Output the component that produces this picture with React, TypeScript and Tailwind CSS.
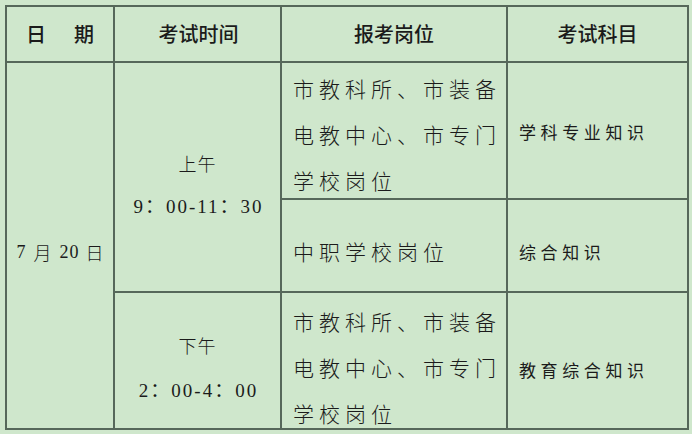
import React from "react";

const sans = { fontFamily: '"Noto Sans CJK SC", "Noto Sans", sans-serif' };
const serif = { fontFamily: '"Liberation Serif", "Noto Sans CJK SC", serif' };

function Cell({ className = "", children }: { className?: string; children?: React.ReactNode }) {
  return <div className={"bg-[#cfe7cc] " + className}>{children}</div>;
}

export default function App() {
  return (
    <div className="w-[692px] h-[434px] bg-[#cfe7cc] pl-[5px] pt-[5px] text-[#1b1b1b]" style={sans}>
      <div className="grid grid-cols-[106px_165px_224px_179px] grid-rows-[54px_135px_91px_135px] gap-[2px] p-[2px] bg-[#56685a] w-[684px] h-[425px]">
        {/* header */}
        <Cell className="flex items-center justify-center text-[20px] font-medium">
          <span className="pr-[2px]">日</span>
          <span className="pl-[26px]">期</span>
        </Cell>
        <Cell className="flex items-center justify-center text-[20px] font-medium pl-[2px]">考试时间</Cell>
        <Cell className="flex items-center justify-center text-[20px] font-medium">报考岗位</Cell>
        <Cell className="flex items-center justify-center text-[20px] font-medium">考试科目</Cell>

        {/* date */}
        <Cell className="row-span-3 flex items-center justify-center text-[18px] pt-[14px]">
          <span style={serif}>7</span>
          <span className="ml-[8px] font-light">月</span>
          <span className="ml-[8px] tracking-[1px]" style={serif}>20</span>
          <span className="ml-[6px] font-light">日</span>
        </Cell>

        {/* morning */}
        <Cell className="row-span-2 flex flex-col items-center justify-center pt-[16px]">
          <div className="text-[18px] font-light tracking-[1px] leading-[22px]">上午</div>
          <div className="text-[19px] mt-[22px] leading-[22px] tracking-[2px] pl-[2px]" style={serif}>
            9：00-11：30
          </div>
        </Cell>
        <Cell className="flex flex-col justify-center pl-[11px] text-[21px] font-light leading-[46px] tracking-[5px] pt-[7px]">
          <div>市教科所、市装备</div>
          <div>电教中心、市专门</div>
          <div>学校岗位</div>
        </Cell>
        <Cell className="flex items-center pl-[11px] text-[17px] tracking-[4.6px] pt-[2px]">学科专业知识</Cell>
        <Cell className="flex items-center pl-[11px] text-[21px] font-light tracking-[5px] pt-[12px]">中职学校岗位</Cell>
        <Cell className="flex items-center pl-[11px] text-[17px] tracking-[4.6px] pt-[12px]">综合知识</Cell>

        {/* afternoon */}
        <Cell className="flex flex-col items-center justify-center pt-[14px]">
          <div className="text-[18px] font-light tracking-[1px] leading-[22px]">下午</div>
          <div className="text-[19px] mt-[24px] leading-[22px] tracking-[2px] pl-[2px]" style={serif}>
            2：00-4：00
          </div>
        </Cell>
        <Cell className="flex flex-col justify-center pl-[11px] text-[21px] font-light leading-[46px] tracking-[5px] pt-[12px]">
          <div>市教科所、市装备</div>
          <div>电教中心、市专门</div>
          <div>学校岗位</div>
        </Cell>
        <Cell className="flex items-center pl-[11px] text-[17px] tracking-[4.6px] pt-[18px]">教育综合知识</Cell>
      </div>
    </div>
  );
}
